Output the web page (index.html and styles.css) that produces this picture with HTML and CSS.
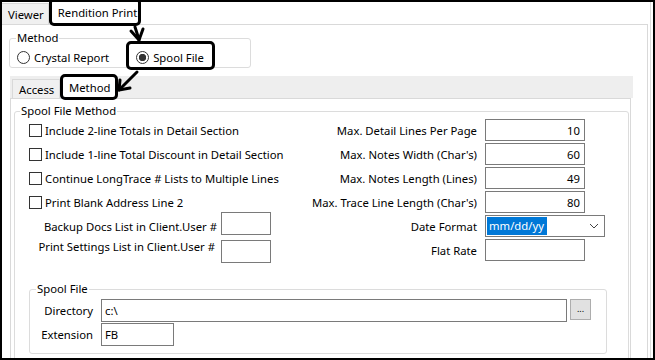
FILE: index.html
```html
<!DOCTYPE html>
<html lang="en">
<head>
  <meta charset="UTF-8" />
  <title>Rendition Print</title>
  <link rel="stylesheet" href="styles.css">
</head>
<body>
  <div class="frame">
    <div class="window">
      <div class="tabs">
        <div class="tab">Viewer</div>
        <div class="tab active mark-top">Rendition Print</div>
      </div>

      <div class="page">
        <fieldset class="group method-group">
          <legend>Method</legend>
          <div class="radios">
            <label class="radio"><span class="dot"></span>Crystal Report</label>
            <label class="radio on mark-radio"><span class="dot"></span>Spool File</label>
          </div>
        </fieldset>

        <div class="subtabs">
          <div class="strip">
            <div class="subtab">Access</div>
            <div class="subtab active mark-sub">Method</div>
          </div>
          <div class="subpage">
            <fieldset class="group main-group">
              <legend>Spool File Method</legend>
              <div class="cols">
                <div class="col-left">
                  <label class="check"><span class="box"></span>Include 2-line Totals in Detail Section</label>
                  <label class="check"><span class="box"></span>Include 1-line Total Discount in Detail Section</label>
                  <label class="check"><span class="box"></span>Continue LongTrace # Lists to Multiple Lines</label>
                  <label class="check"><span class="box"></span>Print Blank Address Line 2</label>
                  <div class="pair backup">
                    <span class="lbl">Backup Docs List in Client.User #</span>
                    <span class="field small"></span>
                  </div>
                  <div class="pair settings">
                    <span class="lbl">Print Settings List in Client.User #</span>
                    <span class="field small"></span>
                  </div>
                </div>
                <div class="col-right">
                  <div class="row"><span class="lbl">Max. Detail Lines Per Page</span><span class="field num">10</span></div>
                  <div class="row"><span class="lbl">Max. Notes Width (Char's)</span><span class="field num">60</span></div>
                  <div class="row"><span class="lbl">Max. Notes Length (Lines)</span><span class="field num">49</span></div>
                  <div class="row"><span class="lbl">Max. Trace Line Length (Char's)</span><span class="field num">80</span></div>
                  <div class="row">
                    <span class="lbl">Date Format</span>
                    <span class="field select">
                      <span class="picked">mm/dd/yy</span>
                      <svg class="chev" width="10" height="6" viewBox="0 0 10 6"><path d="M1 1 L5 5 L9 1" fill="none" stroke="#444" stroke-width="1"/></svg>
                    </span>
                  </div>
                  <div class="row"><span class="lbl">Flat Rate</span><span class="field num"></span></div>
                </div>
              </div>

              <fieldset class="group spool-group">
                <legend>Spool File</legend>
                <div class="line">
                  <span class="lbl">Directory</span>
                  <span class="field dir">c:\</span>
                  <span class="browse">...</span>
                </div>
                <div class="line">
                  <span class="lbl">Extension</span>
                  <span class="field ext">FB</span>
                </div>
              </fieldset>
            </fieldset>
          </div>
        </div>
      </div>
    </div>

    <!-- callout arrows -->
    <svg class="arrows" width="655" height="360" viewBox="0 0 655 360">
      <g fill="none" stroke="#000" stroke-width="3" stroke-linecap="round" stroke-linejoin="round">
        <path d="M135 27 Q137 33 139 40" />
        <path d="M131 31 L139 40 L143 29" />
        <path d="M137 72 L119 90" />
        <path d="M120 80 L119 90 L130 88" />
      </g>
    </svg>
  </div>
</body>
</html>
```
FILE: styles.css
```css
:root {
  --line: #d9d9d9;
  --group: #dcdcdc;
  --field: #7a7a7a;
  --tab-bg: #f0f0f0;
}

body {
  margin: 0;
  font-family: 'Noto Sans', 'Segoe UI', sans-serif;
  font-size: 11.3px;
  color: #000;
  background: #fff;
  white-space: nowrap;
}

.frame {
  position: relative;
  width: 655px;
  height: 360px;
  box-sizing: border-box;
  border: 2px solid #000;
  overflow: hidden;
  background: #fff;
}

.window {
  width: 648px;
  height: 100%;
  border-right: 1px solid #dcdcdc;
  display: flex;
  flex-direction: column;
}

/* outer tabs */
.tabs {
  height: 24px;
  display: flex;
  align-items: flex-end;
}

.tab {
  height: 21px;
  box-sizing: border-box;
  display: flex;
  align-items: center;
  padding: 0 4px 0 6px;
  background: var(--tab-bg);
  border: 1px solid var(--line);
  border-bottom: none;
  border-left: none;
}

.tab.active {
  position: relative;
  background: #fff;
  width: 86px;
  padding: 0 0 0 6px;
  margin-left: 3px;
  margin-bottom: 1px;
  border: none;
}

/* black callout boxes */
.mark-top::before,
.mark-radio::before,
.mark-sub::before {
  content: "";
  position: absolute;
  border: 3px solid #000;
  border-radius: 5px;
}

.mark-top::before { top: -4px; right: -3px; bottom: -3px; left: -3px; }
.mark-radio::before { top: -8px; right: -11px; bottom: -5px; left: -10px; }
.mark-sub::before { top: -3px; right: -3px; bottom: -3px; left: -3px; }

.page {
  flex: 1;
  width: 646px;
  box-sizing: border-box;
  border-top: 1px solid var(--line);
  border-right: 1px solid var(--line);
  padding-left: 7px;
}

/* group boxes */
.group {
  margin: 0;
  padding: 0;
  border: 1px solid var(--group);
  border-radius: 3px;
  box-sizing: border-box;
  min-width: 0;
}

.group legend {
  padding: 0 1px;
  line-height: 14px;
}

.method-group {
  margin-top: 6px;
  width: 242px;
  height: 37px;
}

.method-group legend { margin-left: 6px; }

.radios {
  display: flex;
  padding: 4px 0 0 7px;
}

.radio {
  position: relative;
  display: inline-flex;
  align-items: center;
  height: 16px;
}

.radio + .radio { margin-left: 27px; }

.dot {
  width: 13px;
  height: 13px;
  box-sizing: border-box;
  border: 1px solid #333;
  border-radius: 50%;
  margin-right: 4px;
  background: #fff;
}

.radio.on .dot {
  background: radial-gradient(circle, #333 0 3.4px, #fff 4px);
}

/* inner tabs */
.subtabs {
  margin: 8px 0 0 1px;
}

.strip {
  width: 623px;
  height: 22px;
  background: #eeeeee;
  display: flex;
  align-items: flex-end;
}

.subtab {
  height: 19px;
  box-sizing: border-box;
  display: flex;
  align-items: center;
  margin-left: 2px;
  width: 48px;
  padding-left: 6px;
  background: var(--tab-bg);
  border: 1px solid var(--line);
  border-bottom: none;
}

.subtab.active {
  position: relative;
  width: 52px;
  height: 20px;
  margin: 0 0 1px 3px;
  background: #fff;
  border: none;
}

.subpage {
  width: 621px;
  height: 260px;
  box-sizing: border-box;
  border: 1px solid var(--line);
  border-bottom: none;
  background: #fff;
}

.main-group {
  margin: 5px 0 0 3px;
  width: 615px;
  height: 300px;
}

.main-group legend { margin-left: 5px; }

.cols {
  display: grid;
  grid-template-columns: 280px 1fr;
  padding: 0 0 0 14px;
}

.check {
  display: flex;
  align-items: center;
  height: 24px;
}

.box {
  width: 13px;
  height: 13px;
  box-sizing: border-box;
  border: 1px solid #333;
  margin-right: 3px;
  background: #fff;
}

.pair {
  display: grid;
  grid-template-columns: 188px 50px;
  column-gap: 4px;
  align-items: center;
}

.pair .lbl { text-align: right; }
.pair.backup { margin-top: -2px; }
.pair.backup .lbl { padding-top: 5px; }
.pair.settings { margin-top: 4px; }
.pair.settings .lbl { padding: 0 2px 9px 0; }

.field {
  display: flex;
  align-items: center;
  box-sizing: border-box;
  height: 22px;
  border: 1px solid var(--field);
  background: #fff;
  padding: 0 3px;
}

.field.small { height: 23px; }

.row {
  display: grid;
  grid-template-columns: 168px auto;
  column-gap: 8px;
  align-items: center;
  justify-items: start;
  height: 24px;
}

.row .lbl { justify-self: end; }

.field.num {
  width: 100px;
  justify-content: flex-end;
  padding-right: 4px;
}

.field.select {
  width: 120px;
  padding: 0 0 0 1px;
  justify-content: space-between;
}

.picked {
  background: #0078d7;
  color: #fff;
  height: 18px;
  line-height: 18px;
  padding: 0 3px 0 2px;
  width: 55px;
}

.chev { margin-right: 5px; }

/* spool file group */
.spool-group {
  margin: 19px 0 0 14px;
  width: 578px;
  height: 72px;
}

.spool-group legend { margin-left: 6px; }

.line {
  display: flex;
  align-items: center;
  height: 24px;
}

.line:first-of-type { margin-top: 2px; }

.line .lbl {
  width: 63px;
  text-align: right;
  margin-right: 8px;
}

.field.dir { width: 466px; height: 23px; }
.field.ext { width: 73px; height: 23px; }

.browse {
  width: 21px;
  height: 21px;
  box-sizing: border-box;
  margin: -2px 0 0 3px;
  background: #e1e1e1;
  border: 1px solid #adadad;
  display: flex;
  align-items: center;
  justify-content: center;
  font-size: 9px;
  line-height: 1;
  padding-bottom: 2px;
}

.arrows {
  position: absolute;
  top: -2px;
  left: -2px;
  pointer-events: none;
}
```
